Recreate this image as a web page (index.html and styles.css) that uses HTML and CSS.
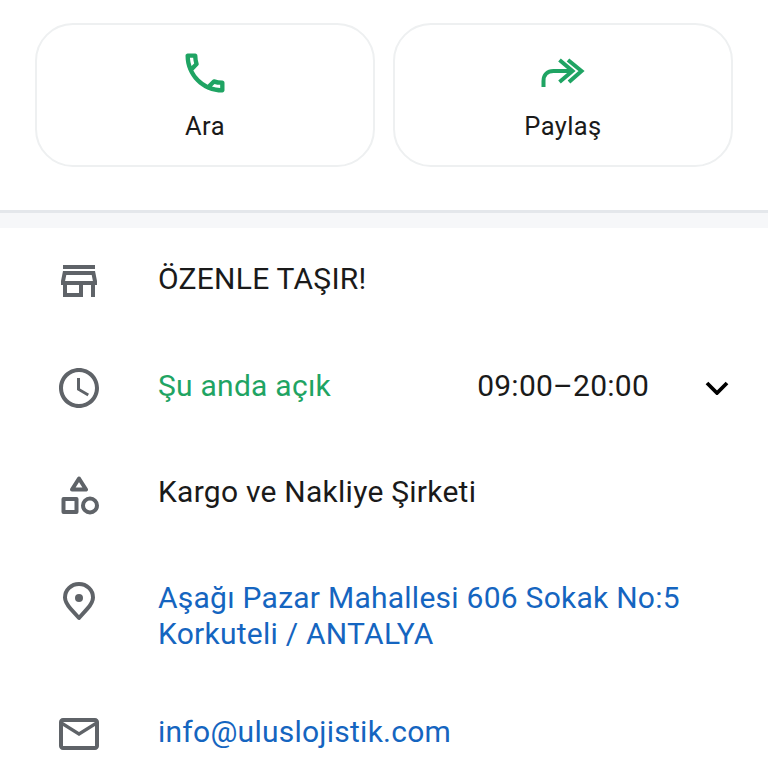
FILE: index.html
```html
<!DOCTYPE html>
<html lang="tr">
<head>
<meta charset="utf-8">
<title>ÖZENLE TAŞIR!</title>
<link rel="stylesheet" href="styles.css">
</head>
<body>
<section class="actions">
  <button class="action">
    <svg class="action-icon" viewBox="0 0 24 24"><path class="fill-green" d="M6.54 5c.06.89.21 1.76.45 2.59l-1.2 1.2c-.41-1.2-.67-2.47-.76-3.79h1.51m9.86 12.02c.85.24 1.72.39 2.6.45v1.49c-1.32-.09-2.59-.35-3.8-.75l1.2-1.19M7.5 3H4c-.55 0-1 .45-1 1 0 9.39 7.61 17 17 17 .55 0 1-.45 1-1v-3.49c0-.55-.45-1-1-1-1.24 0-2.45-.2-3.57-.57-.1-.04-.21-.05-.31-.05-.26 0-.51.1-.71.29l-2.2 2.2c-2.83-1.45-5.15-3.76-6.59-6.59l2.2-2.2c.28-.28.36-.67.25-1.02C8.7 6.45 8.5 5.25 8.5 4c0-.55-.45-1-1-1z"/></svg>
    <span>Ara</span>
  </button>
  <button class="action">
    <svg class="action-icon" viewBox="0 0 52 52"><path class="stroke-green" d="M6.500 40v-6c0-6 4-10 10-10h20M22.500 13l13 11-13 11M31 13l13.500 11-12.500 11"/></svg>
    <span>Paylaş</span>
  </button>
</section>
<div class="divider"></div>
<ul class="info">
  <li class="row">
    <svg class="icon" viewBox="0 0 24 24"><path d="M4 4h16v2H4zm16 3H4l-1 5v2h1v6h10v-6h4v6h2v-6h1v-2l-1-5zm-8 11H6v-4h6v4zm-6.960-6l.6-3h12.72l.6 3H5.04z"/></svg>
    <span class="text">ÖZENLE TAŞIR!</span>
  </li>
  <li class="row">
    <svg class="icon" viewBox="0 0 24 24"><path d="M11.99 2C6.47 2 2 6.48 2 12s4.470 10 9.990 10C17.520 22 22 17.520 22 12S17.520 2 11.990 2zM12 20c-4.420 0-8-3.580-8-8s3.580-8 8-8 8 3.580 8 8-3.580 8-8 8zm.5-13H11v6l5.250 3.150.75-1.230-4.500-2.670z"/></svg>
    <span class="text open">Şu anda açık</span>
    <span class="text hours">09:00–20:00</span>
    <svg class="chevron" viewBox="0 0 24 14"><path d="M2 2l10 10L22 2"/></svg>
  </li>
  <li class="row row-category">
    <svg class="icon" viewBox="0 0 48 48"><path class="outline" d="M24 8.500l7 11h-14zM8.500 29h13v13h-13z"/><circle class="outline" cx="35" cy="35.500" r="7"/></svg>
    <span class="text">Kargo ve Nakliye Şirketi</span>
  </li>
  <li class="row row-address">
    <svg class="icon" viewBox="0 0 48 48"><path class="outline" d="M24 8c-7.700 0-14 5.900-14 13.500 0 4.300 2.200 7.300 5.600 11.200L24 42l8.400-9.300c3.400-3.900 5.600-6.900 5.600-11.200C38 13.900 31.700 8 24 8z"/><circle cx="24" cy="22" r="4"/></svg>
    <a class="text link">Aşağı Pazar Mahallesi 606 Sokak No:5<br>Korkuteli / ANTALYA</a>
  </li>
  <li class="row">
    <svg class="icon" viewBox="0 0 24 24"><path d="M20 4H4c-1.100 0-1.990.9-1.990 2L2 18c0 1.100.9 2 2 2h16c1.100 0 2-.9 2-2V6c0-1.100-.9-2-2-2zm0 14H4V8l8 5 8-5v10zm-8-7L4 6h16l-8 5z"/></svg>
    <a class="text link">info@uluslojistik.com</a>
  </li>
</ul>
</body>
</html>
```
FILE: styles.css
```css
html, body {
  margin: 0;
  padding: 0;
  background: #fff;
}
body {
  font-family: Roboto, "Liberation Sans", sans-serif;
  color: #1a1a1a;
}
.actions {
  display: flex;
  gap: 18px;
  padding: 23px 35px 43px;
}
.action {
  flex: 1;
  height: 144px;
  box-sizing: border-box;
  border: 2px solid #eef0f1;
  border-radius: 38px;
  background: #fff;
  display: flex;
  flex-direction: column;
  align-items: center;
  padding: 22px 0 0;
  font: 400 25.500px/36px Roboto, sans-serif;
  letter-spacing: 0.400px;
  color: #1a1a1a;
}
.action-icon {
  width: 52px;
  height: 52px;
  margin-bottom: 9px;
}
.fill-green { fill: #1fa463; }
.stroke-green {
  fill: none;
  stroke: #1fa463;
  stroke-width: 4;
}
.divider {
  height: 15px;
  background: #f6f7f9;
  border-top: 3px solid #e4e7eb;
}
.info {
  list-style: none;
  margin: 0;
  padding: 29px 39px 0 55px;
}
.row {
  display: flex;
  align-items: flex-start;
  margin-bottom: 58.500px;
}
.row:last-child { margin-bottom: 0; }
.row-category { margin-bottom: 58px; }
.row-address { margin-bottom: 57.500px; }
.icon {
  flex: none;
  width: 48px;
  height: 48px;
  margin-right: 55px;
  fill: #5f6368;
}
.outline {
  fill: none;
  stroke: #5f6368;
  stroke-width: 4;
  stroke-linejoin: round;
}
.text {
  font-size: 30px;
  line-height: 36px;
  letter-spacing: 0.250px;
  margin-top: 4px;
}
.open { color: #1fa463; flex: 1; }
.hours { margin-right: 56px; }
.link { color: #1565c0; }
.chevron {
  width: 24px;
  height: 14px;
  margin-top: 17px;
  fill: none;
  stroke: #000;
  stroke-width: 3.800;
}
```
